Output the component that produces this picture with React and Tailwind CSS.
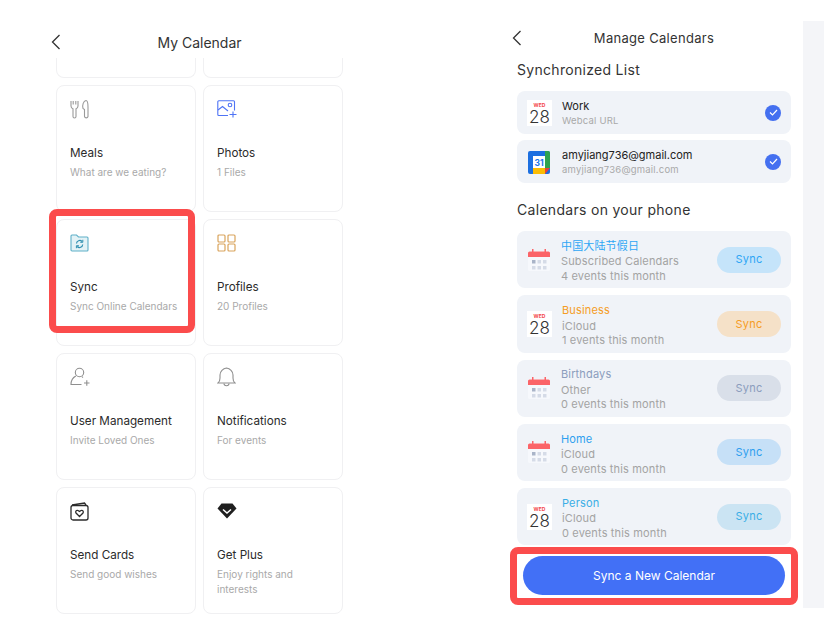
import React from "react";

const FONT = "font-['Inter','Noto_Sans_CJK_SC',sans-serif]";

// ===== Icons =====
const Chevron = () => (
  <svg width="10" height="16" viewBox="0 0 10 16" fill="none" stroke="#333" strokeWidth="1.3">
    <path d="M8.5 1 L1.5 8 L8.5 15" />
  </svg>
);

const MealsIcon = () => (
  <svg width="20" height="20" viewBox="0 0 20 20" fill="none" stroke="#9a9a9a" strokeWidth="1.1">
    <path d="M1 2 v5 a3 3 0 0 0 2 2.8 V17.5 a1.5 1.5 0 0 0 3 0 V9.8 A3 3 0 0 0 8 7 V2 M3.2 2 v3.5 M5.8 2 v3.5" />
    <path d="M13 9.5 C12 6 13.500 2 16 1.500 C18 1.500 18 5 18 8 V17.500 a1.800 1.800 0 0 1 -3.500 0 V10.500 Z" />
  </svg>
);

const PhotosIcon = () => (
  <svg width="20" height="18" viewBox="0 0 20 18" fill="none" stroke="#4f74f5" strokeWidth="1.1">
    <path d="M11 15.500 H1.800 a1 1 0 0 1 -1 -1 V1.800 a1 1 0 0 1 1 -1 H16.500 a1 1 0 0 1 1 1 V10.500" />
    <path d="M1 10 L5.500 6.500 L11 11" />
    <circle cx="13" cy="5" r="1.800" />
    <path d="M12.500 14.500 H19.500 M16 11.500 V17.500" />
  </svg>
);

const SyncIcon = () => (
  <svg width="19" height="18" viewBox="0 0 19 18" fill="none">
    <path d="M1 2 a1 1 0 0 1 1 -1 H6.500 L8.500 3 H17 a1 1 0 0 1 1 1 V16 a1 1 0 0 1 -1 1 H2 a1 1 0 0 1 -1 -1 Z" fill="#e3f2f6" stroke="#5fb0c8" strokeWidth="1.100" />
    <path d="M6.500 9.500 a3.200 3.200 0 0 1 5.500 -2 M12.700 10.500 a3.200 3.200 0 0 1 -5.500 2" stroke="#2f8fb0" strokeWidth="1.200" />
    <path d="M12.800 5.800 V8.300 H10.300 M6.400 14.200 V11.700 H8.900" stroke="#2f8fb0" strokeWidth="1" />
  </svg>
);

const ProfilesIcon = () => (
  <svg width="19" height="18" viewBox="0 0 19 18" fill="none" stroke="#d9a45c" strokeWidth="1.200">
    <rect x="1" y="1" width="7" height="7" rx="1" />
    <rect x="11" y="1" width="7" height="7" rx="1" />
    <rect x="1" y="10" width="7" height="7" rx="1" />
    <rect x="11" y="10" width="7" height="7" rx="1" />
  </svg>
);

const UserIcon = () => (
  <svg width="20" height="20" viewBox="0 0 20 20" fill="none" stroke="#8f8f8f" strokeWidth="1.100">
    <circle cx="9.500" cy="5.500" r="4.200" />
    <path d="M5.800 9 C3 10.500 1 13 1 17.500 H11.500" />
    <path d="M13 10.500 C12.500 10 12 9.600 12 9.600 M14 16 H19.500 M16.800 13.200 V18.800" />
  </svg>
);

const BellIcon = () => (
  <svg width="19" height="20" viewBox="0 0 19 20" fill="none" stroke="#8f8f8f" strokeWidth="1.100">
    <path d="M1 16 C2.500 15 3 13.500 3 11 V8 C3 4.500 6 1.500 9.500 1 C13 1.500 16 4.500 16 8 V11 C16 13.500 16.500 15 18 16 Z" />
    <path d="M7 16.500 C7 19.500 12 19.500 12 16.500" />
  </svg>
);

const CardIcon = () => (
  <svg width="19" height="19" viewBox="0 0 19 19" fill="none" stroke="#2b2b2b" strokeWidth="1.300">
    <rect x="1" y="3.500" width="17" height="14.500" rx="2" />
    <path d="M2 3 L14.500 1 L16 3" />
    <path d="M9.500 14.500 L6 11 C5 9.500 6.500 7.800 8 8.500 L9.500 9.500 L11 8.500 C12.500 7.800 14 9.500 13 11 Z" />
  </svg>
);

const DiamondIcon = () => (
  <svg width="20" height="16" viewBox="0 0 20 16">
    <path d="M4.500 0.500 H15.500 L19.500 5.500 L10 15.500 L0.500 5.500 Z" fill="#1f1f1f" />
    <path d="M6 6.500 L10 10 L14 6.500" fill="none" stroke="#fff" strokeWidth="1.500" />
  </svg>
);

const DateIcon = () => (
  <div className="w-[25px] h-[26px] bg-white flex flex-col items-center shrink-0">
    <span className="text-[5px] leading-[6px] mt-[2px] font-bold text-[#f4474a]">WED</span>
    <span className="text-[17px] leading-[17px] mt-[1px] font-light text-[#333]">28</span>
  </div>
);

const GoogleIcon = () => (
  <svg width="24" height="24" viewBox="0 0 24 24" className="shrink-0">
    <rect x="1" y="1" width="22" height="23" rx="2" fill="#1c6fe0" />
    <path d="M18 1 H21 a2 2 0 0 1 2 2 V18 H18 Z" fill="#2fa24f" />
    <path d="M6 18 H18 V24 H6 Z" fill="#fbbc04" />
    <path d="M18 18 H23 L18 24 Z" fill="#ea4335" />
    <rect x="6" y="6" width="12" height="12" fill="#fff" />
    <text x="12" y="16" textAnchor="middle" fontSize="8.500" fontWeight="700" fill="#1a73e8" fontFamily="Inter, sans-serif">31</text>
  </svg>
);

const GridCalIcon = () => (
  <svg width="24" height="24" viewBox="0 0 24 24" className="shrink-0">
    <rect x="1" y="3" width="22" height="20" rx="1.500" fill="#f6f8fc" />
    <path d="M1 9 V5 a1.500 1.500 0 0 1 1.500 -1.500 H21.500 A1.500 1.500 0 0 1 23 5 V9 Z" fill="#fb6468" />
    <rect x="5" y="1" width="1.500" height="4" fill="#fb6468" />
    <rect x="17.500" y="1" width="1.500" height="4" fill="#fb6468" />
    <rect x="5" y="12" width="3.500" height="3.500" fill="#a9b4c8" />
    <rect x="10.500" y="12" width="3.500" height="3.500" fill="#d5dbe7" />
    <rect x="16" y="12" width="3.500" height="3.500" fill="#d5dbe7" />
    <rect x="5" y="18" width="3.500" height="3.500" fill="#d5dbe7" />
    <rect x="10.500" y="18" width="3.500" height="3.500" fill="#d5dbe7" />
    <rect x="16" y="18" width="3.500" height="3.500" fill="#d5dbe7" />
  </svg>
);

const CheckBadge = () => (
  <span className="w-4 h-4 rounded-full bg-[#4470f0] flex items-center justify-center shrink-0">
    <svg width="9" height="7" viewBox="0 0 9 7" fill="none" stroke="#fff" strokeWidth="1.200">
      <path d="M1 3.500 L3.500 6 L8 1" />
    </svg>
  </span>
);

// ===== Left screen card =====
const FeatureCard = ({ icon, title, lines }) => (
  <div className="h-[127px] bg-white border border-[#f0f0f2] rounded-lg pl-[13px] pr-2 pt-[13px]">
    <div className="h-5 flex items-center">{icon}</div>
    <div className="mt-[26px] text-[11.700px] leading-[16px] text-[#2b2b2b]">{title}</div>
    <div className="mt-[4px] text-[10px] leading-[15px] text-[#a9a9a9]">
      {lines.map((l) => (
        <div key={l}>{l}</div>
      ))}
    </div>
  </div>
);

const features = [
  { icon: <MealsIcon />, title: "Meals", lines: ["What are we eating?"] },
  { icon: <PhotosIcon />, title: "Photos", lines: ["1 Files"] },
  { icon: <SyncIcon />, title: "Sync", lines: ["Sync Online Calendars"] },
  { icon: <ProfilesIcon />, title: "Profiles", lines: ["20 Profiles"] },
  { icon: <UserIcon />, title: "User Management", lines: ["Invite Loved Ones"] },
  { icon: <BellIcon />, title: "Notifications", lines: ["For events"] },
  { icon: <CardIcon />, title: "Send Cards", lines: ["Send good wishes"] },
  { icon: <DiamondIcon />, title: "Get Plus", lines: ["Enjoy rights and", "interests"] },
];

const phoneCalendars = [
  { icon: <GridCalIcon />, name: "中国大陆节假日", source: "Subscribed Calendars", count: "4 events this month", nameCls: "text-[#2ea6f5]", btnCls: "bg-[#c5e4fa] text-[#2ea6f5]" },
  { icon: <DateIcon />, name: "Business", source: "iCloud", count: "1 events this month", nameCls: "text-[#f59d25]", btnCls: "bg-[#f5e1c8] text-[#f59d25]" },
  { icon: <GridCalIcon />, name: "Birthdays", source: "Other", count: "0 events this month", nameCls: "text-[#8b9dbd]", btnCls: "bg-[#d9dfe9] text-[#8b9dbd]" },
  { icon: <GridCalIcon />, name: "Home", source: "iCloud", count: "0 events this month", nameCls: "text-[#2e9fef]", btnCls: "bg-[#c6e0f7] text-[#2e9fef]" },
  { icon: <DateIcon />, name: "Person", source: "iCloud", count: "0 events this month", nameCls: "text-[#3aaee6]", btnCls: "bg-[#cbe4f3] text-[#3aaee6]" },
];

export default function App() {
  return (
    <div className={`relative w-[836px] h-[622px] bg-white flex overflow-hidden ${FONT}`}>
      {/* Left screen */}
      <div className="ml-[56px] w-[287px]">
        <div className="relative h-[58px] pt-[34px] text-center text-[14px] leading-[18px] text-[#333]">
          My Calendar
          <span className="absolute left-[-5px] top-[34px]">
            <Chevron />
          </span>
        </div>
        <div className="grid grid-cols-2 gap-x-[7px]">
          <div className="h-5 border border-t-0 border-[#f0f0f2] rounded-b-lg" />
          <div className="h-5 border border-t-0 border-[#f0f0f2] rounded-b-lg" />
        </div>
        <div className="mt-[7px] grid grid-cols-2 gap-[7px]">
          {features.map((f) => (
            <FeatureCard key={f.title} {...f} />
          ))}
        </div>
      </div>

      {/* Right screen */}
      <div className="ml-[174px] w-[274px]">
        <div className="relative h-[29px] pt-[29px] box-content text-center text-[13px] leading-[18px] tracking-[0.3px] text-[#333]">
          Manage Calendars
          <span className="absolute left-[-5px] top-[30px]">
            <Chevron />
          </span>
        </div>
        <div className="mt-[2px] text-[14px] leading-[20px] tracking-[0.3px] text-[#333]">Synchronized List</div>

        <div className="mt-[11px] flex flex-col gap-[6px]">
          <div className="h-[43px] rounded-lg bg-[#f0f3f8] flex items-center px-[10px]">
            <DateIcon />
            <div className="ml-[10px] flex-1">
              <div className="text-[11px] leading-[15px] text-[#222]">Work</div>
              <div className="text-[9.500px] leading-[13px] tracking-[0.2px] text-[#a9a9a9]">Webcal URL</div>
            </div>
            <CheckBadge />
          </div>
          <div className="h-[43px] rounded-lg bg-[#f0f3f8] flex items-center px-[10px]">
            <GoogleIcon />
            <div className="ml-[11px] flex-1">
              <div className="text-[11px] leading-[15px] text-[#222]">amyjiang736@gmail.com</div>
              <div className="text-[9.500px] leading-[13px] tracking-[0.2px] text-[#a9a9a9]">amyjiang736@gmail.com</div>
            </div>
            <CheckBadge />
          </div>
        </div>

        <div className="mt-[17px] text-[14px] leading-[20px] tracking-[0.3px] text-[#333]">Calendars on your phone</div>

        <div className="mt-[11px] flex flex-col gap-[7px]">
          {phoneCalendars.map((c) => (
            <div key={c.name} className="h-[57.250px] rounded-lg bg-[#f0f3f8] flex items-center px-[10px]">
              {c.icon}
              <div className="ml-[10px] pt-[3px] flex-1 text-[11px] leading-[14.500px] tracking-[0.15px] text-[#a3a3a3]">
                <div className={`mb-[1px] ${c.nameCls}`}>{c.name}</div>
                <div>{c.source}</div>
                <div>{c.count}</div>
              </div>
              <span className={`w-16 h-[26px] rounded-full flex items-center justify-center text-[11px] tracking-[0.2px] ${c.btnCls}`}>
                Sync
              </span>
            </div>
          ))}
        </div>

        <div className="mt-[11px] w-[262px] ml-[6px] h-[39px] rounded-full bg-[#4270f6] flex items-center justify-center text-[12px] text-white">
          Sync a New Calendar
        </div>
      </div>

      {/* Grey strip beside the right screen */}
      <div className="ml-[12px] mt-[21px] w-[21px] h-[587px] bg-[#f4f5f8]" />

      {/* Red highlight boxes */}
      <div className="absolute left-[49px] top-[209px] w-[146px] h-[124px] border-[7px] border-[#fb4c4c] rounded-lg" />
      <div className="absolute left-[510px] top-[547px] w-[288px] h-[58px] border-[7px] border-[#fb4c4c] rounded-lg" />
    </div>
  );
}
